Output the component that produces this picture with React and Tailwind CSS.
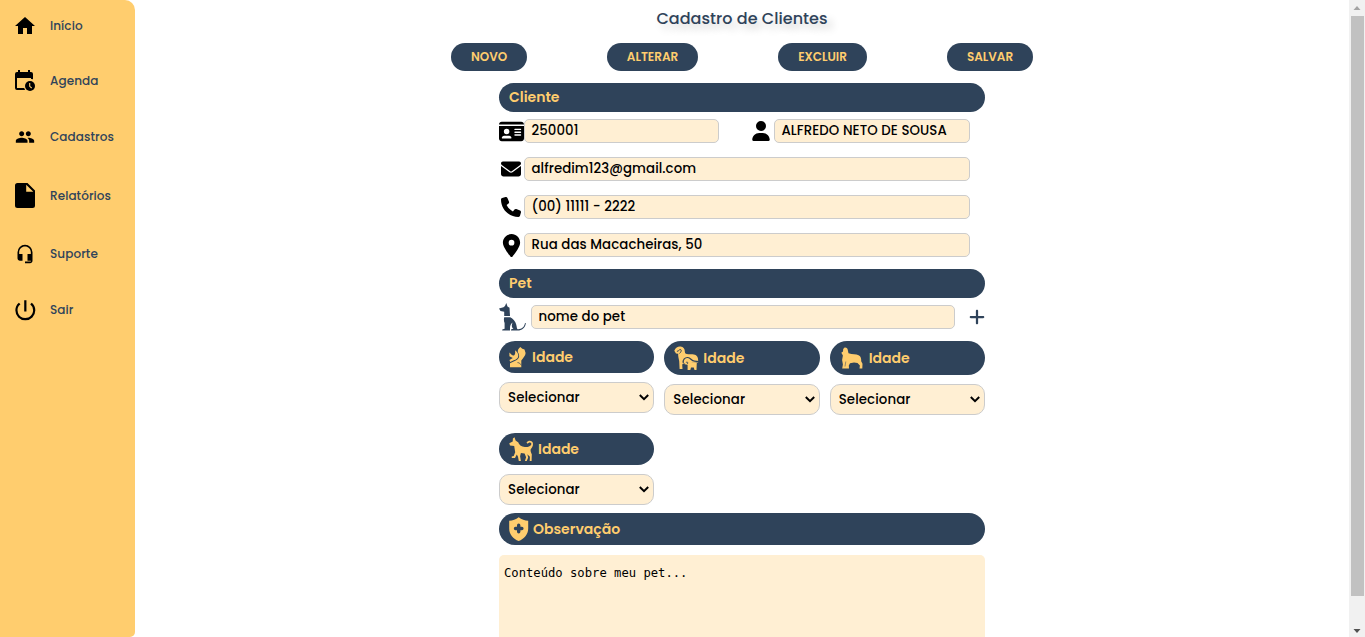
import React from 'react';
import { MdHome, MdGroup, MdHeadsetMic, MdPowerSettingsNew } from 'react-icons/md';
import { FaIdCard, FaUser, FaEnvelope, FaPhone, FaLocationDot, FaPlus } from 'react-icons/fa6';

function CalendarClock() {
  return (
    <svg width="20" height="21" viewBox="0 0 20 21">
      <path fillRule="evenodd" d="M3 0h2v2h8V0h2v2h1a2 2 0 0 1 2 2v5.2a6 6 0 0 0-2-.2V8H2v10h7.2c.2.7.5 1.400 1 2H2a2 2 0 0 1-2-2V4a2 2 0 0 1 2-2h1z" />
      <circle cx="15" cy="16" r="5" />
      <path d="M14.700 13v3.300l2 1.700" fill="none" stroke="#ffcd6e" strokeWidth="1.100" />
    </svg>
  );
}

function FileIcon() {
  return (
    <svg width="20" height="25" viewBox="0 0 20 25">
      <path fillRule="evenodd" d="M2.500 0H12.500L20 7.500V22.500A2.500 2.500 0 0 1 17.500 25H2.500A2.500 2.500 0 0 1 0 22.500V2.500A2.500 2.500 0 0 1 2.500 0ZM11.200 1.700V8.800H18.300Z" />
    </svg>
  );
}

function SittingDog() {
  return (
    <svg className="shrink-0" width="27" height="28" viewBox="0 0 27 28" fill="#2f435a">
      <path d="M7.300 0L8.500 3.500L10.500 4.800L11 13H5.200V8.700L1.500 8L0 5.500L4.500 4.300L6 3Z" />
      <path d="M5.200 14.200H11.200C14 15.500 16.500 18.500 17.200 21.500C18 24 17.600 25.500 18.600 26.200C22.300 26.500 25.500 24 26 20L26.800 20C26.500 25 22.500 27.800 18.300 27.600H12L12.200 26.300L14.500 25.800C12.500 24.500 12.300 21.500 13.800 19.600C11.400 20.800 10.900 23.500 11 25.500V27.600H3.200L3.300 26.500L5.600 25.800V20C4.800 18 4.700 16.500 5.200 14.200Z" />
    </svg>
  );
}

function BreedIcon() {
  return (
    <svg width="17" height="21" viewBox="0 0 17 21">
      <path fill="#ffcd6e" d="M11.300 0L13.300 1.800L15.500 2.500L16.600 6C16.600 8.800 14 11 12.300 13.500V20.300H1V16.200L6.800 13.600C10.700 11.500 10.800 8.500 9 5.500C8.200 3.500 9.500 1.500 11.300 0Z" />
      <path fill="#ffcd6e" d="M6 3.300C8.200 4.600 9.500 7 9.300 9C9 11.500 7 12.600 4.800 13.300L1.200 15L.5 12.900L3.800 11L.4 9.200V5.400C1.800 6.500 2.800 8.300 4.500 8.600C6 8.600 6.600 6 6 3.300Z" />
      <path d="M8.500 15.600C10.500 15.600 11 17 12.400 18" fill="none" stroke="#2f435a" strokeWidth=".8" />
    </svg>
  );
}

function CoatIcon() {
  return (
    <svg width="25" height="25" viewBox="0 0 25 25">
      <path fill="#ffcd6e" d="M.3 4.800C1.600 1.400 4.200.2 6.500.5C9.500.8 11 3 10.800 5.500C10.800 8.200 13 8.300 15 8.200C18 8 20.500 8.200 22 9.200C24 10.500 24.300 12.500 24.200 16.500L18 16.500L12 17.500L10.300 17L8.200 18.500L8.500 23H5.600L5.200 15C4.500 12 4 10 4.200 7.800L2 7.600Z" />
      <path fill="none" stroke="#2f435a" strokeWidth="1" strokeLinecap="round" d="M3.300 5.300C5 5.300 5 3.500 6.300 3.500C8 3.700 7.200 6 5.800 7.200" />
      <path fill="none" stroke="#2f435a" strokeWidth="1.200" d="M9.300 17C8.600 13.800 11 11.300 13.800 11.500C16.800 11.800 17.200 14.900 20.500 15.100L24.800 15.600" />
      <path fill="#ffcd6e" d="M10.300 16C11 13.700 14 12.800 15.500 15C17.200 17 21 15.600 22.800 17L22.500 24H20.500L19.800 21.600H17L16.300 24H13.600V18.700L10.600 18.300Z" />
      <path fill="none" stroke="#2f435a" strokeWidth=".8" strokeLinecap="round" d="M12.200 16.300C13.500 15.400 14.500 16.500 13.600 17.700" />
    </svg>
  );
}

function SizeIcon() {
  return (
    <svg width="22" height="22" viewBox="0 0 22 22" fill="#ffcd6e">
      <path d="M3.600.6C5.300.2 6.800 1.500 6.900 3.500L7.500 6.300C11.500 7.600 15 6.700 17.600 8.200C20 9.500 20.300 11.500 20.200 14.200L21.500 16.800L21.300 21.500H18.500L18.900 18.500L16.500 16L13 15.500L9 16.300L7.800 18.500L8 21.500H1.200L1.900 17.500L1.100 13L1.900 8.400L.3 5.700L2 4.500L2.200 2Z" />
      <path d="M4.800 14.500L4 19.500" fill="none" stroke="#2f435a" strokeWidth=".5" />
    </svg>
  );
}

function WalkingDog() {
  return (
    <svg width="25" height="25" viewBox="0 0 25 25">
      <path fill="#ffcd6e" d="M5.500.3L6.600 3.600L9.400 5.400C10.500 9.200 15 10.300 18.500 9.900L20 9.500C22 9 22.800 7.500 22.100 6.100C21.300 4.800 19.600 5.400 18.600 6.800L17.500 5.600C19.500 2.900 23.600 3.400 24 6.700C24.200 9.300 22.600 11 21.700 12.300C21.300 14 22 15.500 22.800 17.300L22.600 24H20.700L20.900 19.800L18.300 17.300L19.200 20.500L17.700 24H15.900L17.100 20.200L15.600 16.400L11.900 15.900L11.100 19.200L11.900 24H9.800L9 19.700L7.800 17.500L6 21H2.800L2.700 19.400L4.700 18.900L6.200 15.200L5.700 12.300L5.200 8.900L1 8.400L.3 6.300L3.700 4.400L3.900 1.500Z" />
    </svg>
  );
}

function ShieldIcon() {
  return (
    <svg width="20" height="24" viewBox="0 0 20 24">
      <path fill="#ffcd6e" d="M9.700.2C12.600 2.400 15.800 3.600 19.200 3.800V11.500C19.200 17.500 15 22 9.700 24C4.300 22 .2 17.500.2 11.500V3.800C3.600 3.600 6.900 2.400 9.700.2Z" />
      <path d="M9.700 8.300V14.700M6.500 11.500H12.900" fill="none" stroke="#2f435a" strokeWidth="3.400" strokeLinecap="round" />
    </svg>
  );
}

const NAV = [
  { label: 'Início', icon: <MdHome size={24} />, cls: 'h-[52px]' },
  { label: 'Agenda', icon: <CalendarClock />, cls: 'h-[57px]' },
  { label: 'Cadastros', icon: <MdGroup size={20} />, cls: 'h-[55px]' },
  { label: 'Relatórios', icon: <FileIcon />, cls: 'h-[63px]' },
  { label: 'Suporte', icon: <MdHeadsetMic size={20} />, cls: 'h-[53px]' },
  { label: 'Sair', icon: <MdPowerSettingsNew size={26.667} />, cls: 'h-[60px]' },
];

function Bar({ children, className }) {
  return (
    <div className={`flex items-center rounded-full bg-[#2f435a] px-2.5 text-[14px] font-semibold text-[#ffcd6e] ${className}`}>
      {children}
    </div>
  );
}

function Field({ children, className }) {
  return (
    <div className={`flex h-6 items-center rounded-[5px] border border-[#ccc] bg-[#ffefd3] px-[6.500px] pb-px text-[13.333px] font-medium tracking-[0.070px] whitespace-nowrap text-black ${className}`}>
      {children}
    </div>
  );
}

function IconBox({ children }) {
  return <div className="flex h-6 w-[25px] shrink-0 items-center justify-center">{children}</div>;
}

function Select() {
  return (
    <div className="flex h-[31px] items-center justify-between rounded-[10px] border border-[#ccc] bg-[#ffefd3] pr-1 pl-2 text-[13.333px] font-medium text-black">
      <span className="tracking-[0.1px]">Selecionar</span>
      <svg width="10" height="7" viewBox="0 0 10 7" fill="none" stroke="#000" strokeWidth="2">
        <path d="M.8 1L5 5.200L9.200 1" />
      </svg>
    </div>
  );
}

function Group({ icon, barClass, labelClass }) {
  return (
    <div>
      <Bar className={`mb-[9px] ${barClass}`}>
        {icon}
        <span className={labelClass}>Idade</span>
      </Bar>
      <Select />
    </div>
  );
}

function ActionButton({ children, className }) {
  return (
    <button className={`h-7 rounded-full bg-[#2f435a] text-center text-[12px] font-semibold text-[#ffcd6e] ${className}`}>
      {children}
    </button>
  );
}

export default function App() {
  return (
    <div className="flex h-[637px] w-full overflow-hidden bg-white font-[Poppins,Inter,sans-serif]">
      <nav className="h-full w-[135px] shrink-0 rounded-tr-[10px] rounded-br-[5px] bg-[#ffcd6e]">
        {NAV.map((n) => (
          <div key={n.label} className={`flex items-center text-[12px] font-medium tracking-[0.080px] text-[#2f435a] ${n.cls}`}>
            <div className="flex w-[50px] justify-center text-black">{n.icon}</div>
            <span>{n.label}</span>
          </div>
        ))}
      </nav>

      <main className="flex min-w-0 flex-1 flex-col items-center">
        <h1 className="mt-[7px] h-6 text-[16px] leading-6 font-medium tracking-[0.050px] text-[#2f435a] [text-shadow:5px_5px_8px_rgba(0,0,0,0.2)]">
          Cadastro de Clientes
        </h1>
        <div className="mt-3 flex w-[582px] justify-between">
          <ActionButton className="w-[76px]">NOVO</ActionButton>
          <ActionButton className="w-[91px]">ALTERAR</ActionButton>
          <ActionButton className="w-[89px]">EXCLUIR</ActionButton>
          <ActionButton className="w-[86px]">SALVAR</ActionButton>
        </div>

        <div className="mt-3 flex w-[486px] flex-col">
          <Bar className="h-[29px]"><span>Cliente</span></Bar>
          <div className="mt-[7px] flex flex-col gap-3.5 pr-[15px]">
            <div className="flex justify-between">
              <div className="flex">
                <IconBox><FaIdCard size={25} /></IconBox>
                <Field className="w-[195px]">250001</Field>
              </div>
              <div className="flex">
                <IconBox><FaUser size={20} className="mr-px" /></IconBox>
                <Field className="w-[196px]"><span>ALFREDO NETO DE SOUSA</span></Field>
              </div>
            </div>
            <div className="flex">
              <IconBox><FaEnvelope size={20} className="mr-px" /></IconBox>
              <Field className="flex-1"><span>alfredim123@gmail.com</span></Field>
            </div>
            <div className="flex">
              <IconBox><FaPhone size={20} className="mr-px" /></IconBox>
              <Field className="flex-1"><span>(00) 11111 - 2222</span></Field>
            </div>
            <div className="flex">
              <IconBox><FaLocationDot size={23} /></IconBox>
              <Field className="flex-1"><span>Rua das Macacheiras, 50</span></Field>
            </div>
          </div>

          <Bar className="mt-3 h-[29px]"><span>Pet</span></Bar>
          <div className="mt-[5px] flex h-7 items-start">
            <SittingDog />
            <Field className="mt-[2px] ml-[5px] w-[424px] shrink-0"><span>nome do pet</span></Field>
            <FaPlus size={18} className="mt-[5px] ml-[13px] shrink-0 text-[#2f435a]" />
          </div>

          <div className="mt-[10px] grid grid-cols-3 gap-x-2.5 gap-y-[18px]">
            <Group icon={<BreedIcon />} barClass="h-8" labelClass="ml-[6px]" />
            <Group icon={<CoatIcon />} barClass="h-[34px]" labelClass="ml-[4px]" />
            <Group icon={<SizeIcon />} barClass="h-[34px] pl-[11px]" labelClass="ml-[6px]" />
            <Group icon={<WalkingDog />} barClass="h-8" labelClass="ml-[4px]" />
          </div>

          <Bar className="mt-2 h-8">
            <ShieldIcon />
            <span className="ml-1">Observação</span>
          </Bar>
          <div className="mt-2.5 h-[100px] shrink-0 rounded-[5px] bg-[#ffefd3] px-[5px] pt-[10px] font-['DejaVu_Sans_Mono',monospace] text-[12.200px] leading-4 text-black">
            Conteúdo sobre meu pet...
          </div>
        </div>
      </main>

      <div className="flex w-4 shrink-0 flex-col items-center bg-[#f1f1f1]">
        <svg width="16" height="16" viewBox="0 0 16 16" fill="#a3a3a3"><path d="M4.500 10L8 6L11.500 10Z" /></svg>
        <div className="ml-px h-[580px] w-[13px] bg-[#c1c1c1]" />
        <div className="flex-1" />
        <svg width="16" height="16" viewBox="0 0 16 16" fill="#505050"><path d="M4.500 8L8 12L11.500 8Z" /></svg>
      </div>
    </div>
  );
}
